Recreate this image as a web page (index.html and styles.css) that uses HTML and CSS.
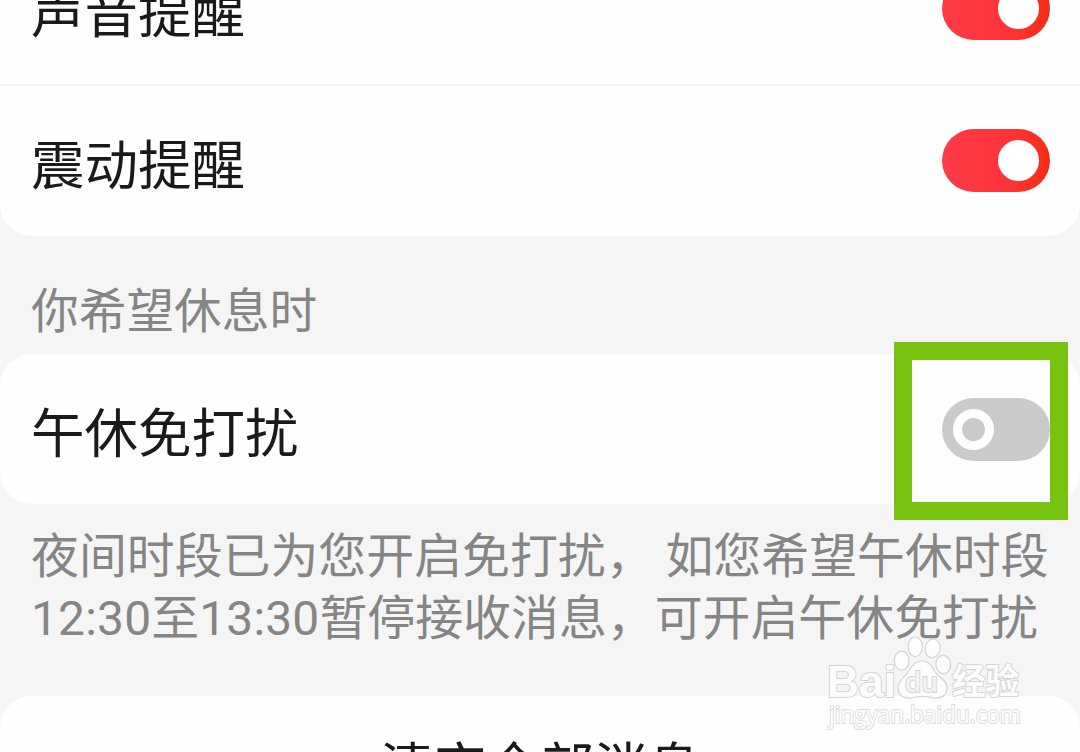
FILE: index.html
```html
<!DOCTYPE html>
<html lang="zh-CN">
<head>
    <meta charset="UTF-8">
    <meta name="viewport" content="width=device-width, initial-scale=1.0">
    <title>消息通知设置</title>
    <link rel="stylesheet" href="styles.css">
</head>
<body>
    <div class="screen">
        <div class="card card-first">
            <div class="row">
                <span class="row-title">声音提醒</span>
                <span class="switch on"><span class="knob"></span></span>
            </div>
            <div class="row">
                <span class="row-title">震动提醒</span>
                <span class="switch on"><span class="knob"></span></span>
            </div>
        </div>

        <div class="section-label">你希望休息时</div>

        <div class="card">
            <div class="row">
                <span class="row-title">午休免打扰</span>
                <span class="switch"><span class="knob"></span></span>
            </div>
            <div class="highlight"></div>
        </div>

        <p class="section-note">夜间时段已为您开启免打扰， 如您希望午休时段<br><span class="time">12:30</span>至<span class="time">13:30</span>暂停接收消息，可开启午休免打扰</p>

        <div class="card">
            <div class="row row-center">
                <span class="row-title">清空全部消息</span>
            </div>
        </div>

        <svg class="watermark" width="210" height="100" viewBox="0 0 210 100">
            <g class="mark">
                <text class="mark-bai" x="17" y="66.5" textLength="69" lengthAdjust="spacingAndGlyphs">Bai</text>
                <ellipse cx="91.7" cy="30.7" rx="7.4" ry="9.5"/>
                <ellipse cx="105.3" cy="16.8" rx="7.2" ry="9.8"/>
                <ellipse cx="122.7" cy="18.3" rx="7.4" ry="9.4" transform="rotate(10 122.7 18.3)"/>
                <ellipse cx="133.3" cy="34.5" rx="7.4" ry="9.2" transform="rotate(-6 133.3 34.5)"/>
                <path d="M112 31 C119 31 122 36 125 42 C129 48 137 50 137 58 C137 66 130 69 124 68 C117 66 108 66 101 68 C94 69 88 65 88 58 C88 51 94 48 98 42 C102 36 105 31 112 31 Z"/>
                <text class="mark-du" x="95" y="62" textLength="33" lengthAdjust="spacingAndGlyphs">du</text>
                <text class="mark-cn" x="142" y="64" textLength="67" lengthAdjust="spacingAndGlyphs">经验</text>
                <text class="mark-url" x="19" y="93" textLength="192" lengthAdjust="spacingAndGlyphs">jingyan.baidu.com</text>
            </g>
        </svg>
    </div>
</body>
</html>
```

FILE: styles.css
```css
* { box-sizing: border-box; }
body { margin: 0; font-family: Roboto, "Noto Sans CJK SC", sans-serif; background: #f5f5f5; }
.screen {
    position: relative;
    width: 1080px; height: 752px;
    overflow: hidden;
    background: #f5f5f5;
    display: flex;
    flex-direction: column;
}

.card { position: relative; flex: none; background: #fefefe; border-radius: 32px; }
/* the list is scrolled, so the first row is partly out of view */
.card-first { margin-top: -66px; }
.card-first .switch { margin-bottom: 2px; }
.row {
    display: flex;
    align-items: center;
    justify-content: space-between;
    height: 150px;
    padding: 0 30px 0 31px;
}
.row + .row { height: 152px; border-top: 2px solid #f3f3f3; }
.row-center { justify-content: center; }
.row-title { padding-top: 12px; font-size: 53.5px; line-height: 80px; color: #1a1a1a; }
.row-center .row-title { padding-top: 0; margin-top: -4px; }

.switch {
    display: flex;
    align-items: center;
    width: 108px; height: 63px;
    padding: 0 11px;
    border-radius: 32px;
    background: #c9caca;
}
.switch .knob { width: 41px; height: 41px; border: 9px solid #fff; border-radius: 50%; }
.switch.on { justify-content: flex-end; background: linear-gradient(90deg, #ff3b48, #ff3439 60%, #f62c17); }
.switch.on .knob { background: #fff; }

.section-label {
    flex: none;
    height: 118px;
    padding: 0 31px;
    font-size: 47.7px;
    line-height: 153px;
    color: #858585;
}
.section-note {
    flex: none;
    height: 192px;
    margin: 0;
    padding: 22px 0 0 31px;
    font-size: 47.9px;
    line-height: 62px;
    white-space: nowrap;
    color: #858585;
}
.time { letter-spacing: 0.2px; }

.highlight {
    position: absolute;
    top: -12px; right: 12px;
    width: 174px; height: 178px;
    border: 18px solid #76c20e;
}

.watermark { position: absolute; left: 810px; top: 630px; overflow: visible; }
.mark { fill: #fdfdfd; stroke: #d4d4d4; stroke-width: 1.2px; }
.mark text { paint-order: stroke; stroke-width: 2px; }
.mark-bai { font: 700 45px "Liberation Sans", sans-serif; }
.mark .mark-du { font: 600 27px "Open Sans", sans-serif; fill: #f3f3f3; }
.mark-cn { font: 700 35px "Noto Sans CJK SC", sans-serif; }
.mark .mark-url { font: 400 24px "Open Sans", sans-serif; stroke: #dedede; }
```
